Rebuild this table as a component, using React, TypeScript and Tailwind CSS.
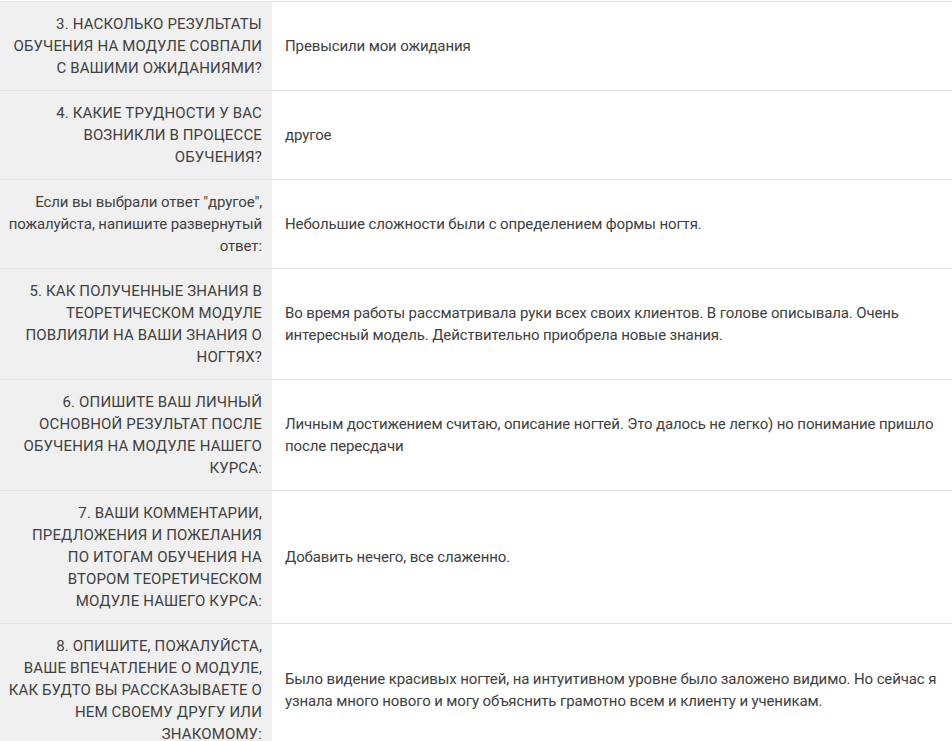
import React from "react";

const rows: { q: string[]; a: string[]; upper?: boolean }[] = [
  { q: ["3. НАСКОЛЬКО РЕЗУЛЬТАТЫ", "ОБУЧЕНИЯ НА МОДУЛЕ СОВПАЛИ", "С ВАШИМИ ОЖИДАНИЯМИ?"], a: ["Превысили мои ожидания"], upper: true },
  { q: ["4. КАКИЕ ТРУДНОСТИ У ВАС", "ВОЗНИКЛИ В ПРОЦЕССЕ", "ОБУЧЕНИЯ?"], a: ["другое"], upper: true },
  { q: ["Если вы выбрали ответ \"другое\",", "пожалуйста, напишите развернутый", "ответ:"], a: ["Небольшие сложности были с определением формы ногтя."] },
  { q: ["5. КАК ПОЛУЧЕННЫЕ ЗНАНИЯ В", "ТЕОРЕТИЧЕСКОМ МОДУЛЕ", "ПОВЛИЯЛИ НА ВАШИ ЗНАНИЯ О", "НОГТЯХ?"], a: ["Во время работы рассматривала руки всех своих клиентов. В голове описывала. Очень", "интересный модель. Действительно приобрела новые знания."], upper: true },
  { q: ["6. ОПИШИТЕ ВАШ ЛИЧНЫЙ", "ОСНОВНОЙ РЕЗУЛЬТАТ ПОСЛЕ", "ОБУЧЕНИЯ НА МОДУЛЕ НАШЕГО", "КУРСА:"], a: ["Личным достижением считаю, описание ногтей. Это далось не легко) но понимание пришло", "после пересдачи"], upper: true },
  { q: ["7. ВАШИ КОММЕНТАРИИ,", "ПРЕДЛОЖЕНИЯ И ПОЖЕЛАНИЯ", "ПО ИТОГАМ ОБУЧЕНИЯ НА", "ВТОРОМ ТЕОРЕТИЧЕСКОМ", "МОДУЛЕ НАШЕГО КУРСА:"], a: ["Добавить нечего, все слаженно."], upper: true },
  { q: ["8. ОПИШИТЕ, ПОЖАЛУЙСТА,", "ВАШЕ ВПЕЧАТЛЕНИЕ О МОДУЛЕ,", "КАК БУДТО ВЫ РАССКАЗЫВАЕТЕ О", "НЕМ СВОЕМУ ДРУГУ ИЛИ", "ЗНАКОМОМУ:"], a: ["Было видение красивых ногтей, на интуитивном уровне было заложено видимо. Но сейчас я", "узнала много нового и могу объяснить грамотно всем и клиенту и ученикам."], upper: true },
];

export default function App() {
  return (
    <div className="w-[952px] h-[741px] overflow-hidden bg-white pt-px" style={{ fontFamily: "Roboto, 'Open Sans', sans-serif" }}>
      {rows.map((r, i) => (
        <div key={i} className="grid grid-cols-[272px_1fr] border-t border-[#e3e3e3] text-[15px] leading-[22px] text-[#404040]">
          <div className={"bg-[#f0f0f0] pl-[6px] pr-[10px] py-[11px] text-right flex flex-col items-end justify-center whitespace-nowrap " + (r.upper ? "tracking-[0.15px]" : "tracking-[-0.1px]")}>
            {r.q.map((l, j) => (
              <span key={j} className="block">{l}</span>
            ))}
          </div>
          <div className="pl-[13px] pr-[8px] py-[11px] flex flex-col justify-center whitespace-nowrap tracking-[-0.12px]">
            {r.a.map((l, j) => (
              <span key={j} className="block">{l}</span>
            ))}
          </div>
        </div>
      ))}
    </div>
  );
}
